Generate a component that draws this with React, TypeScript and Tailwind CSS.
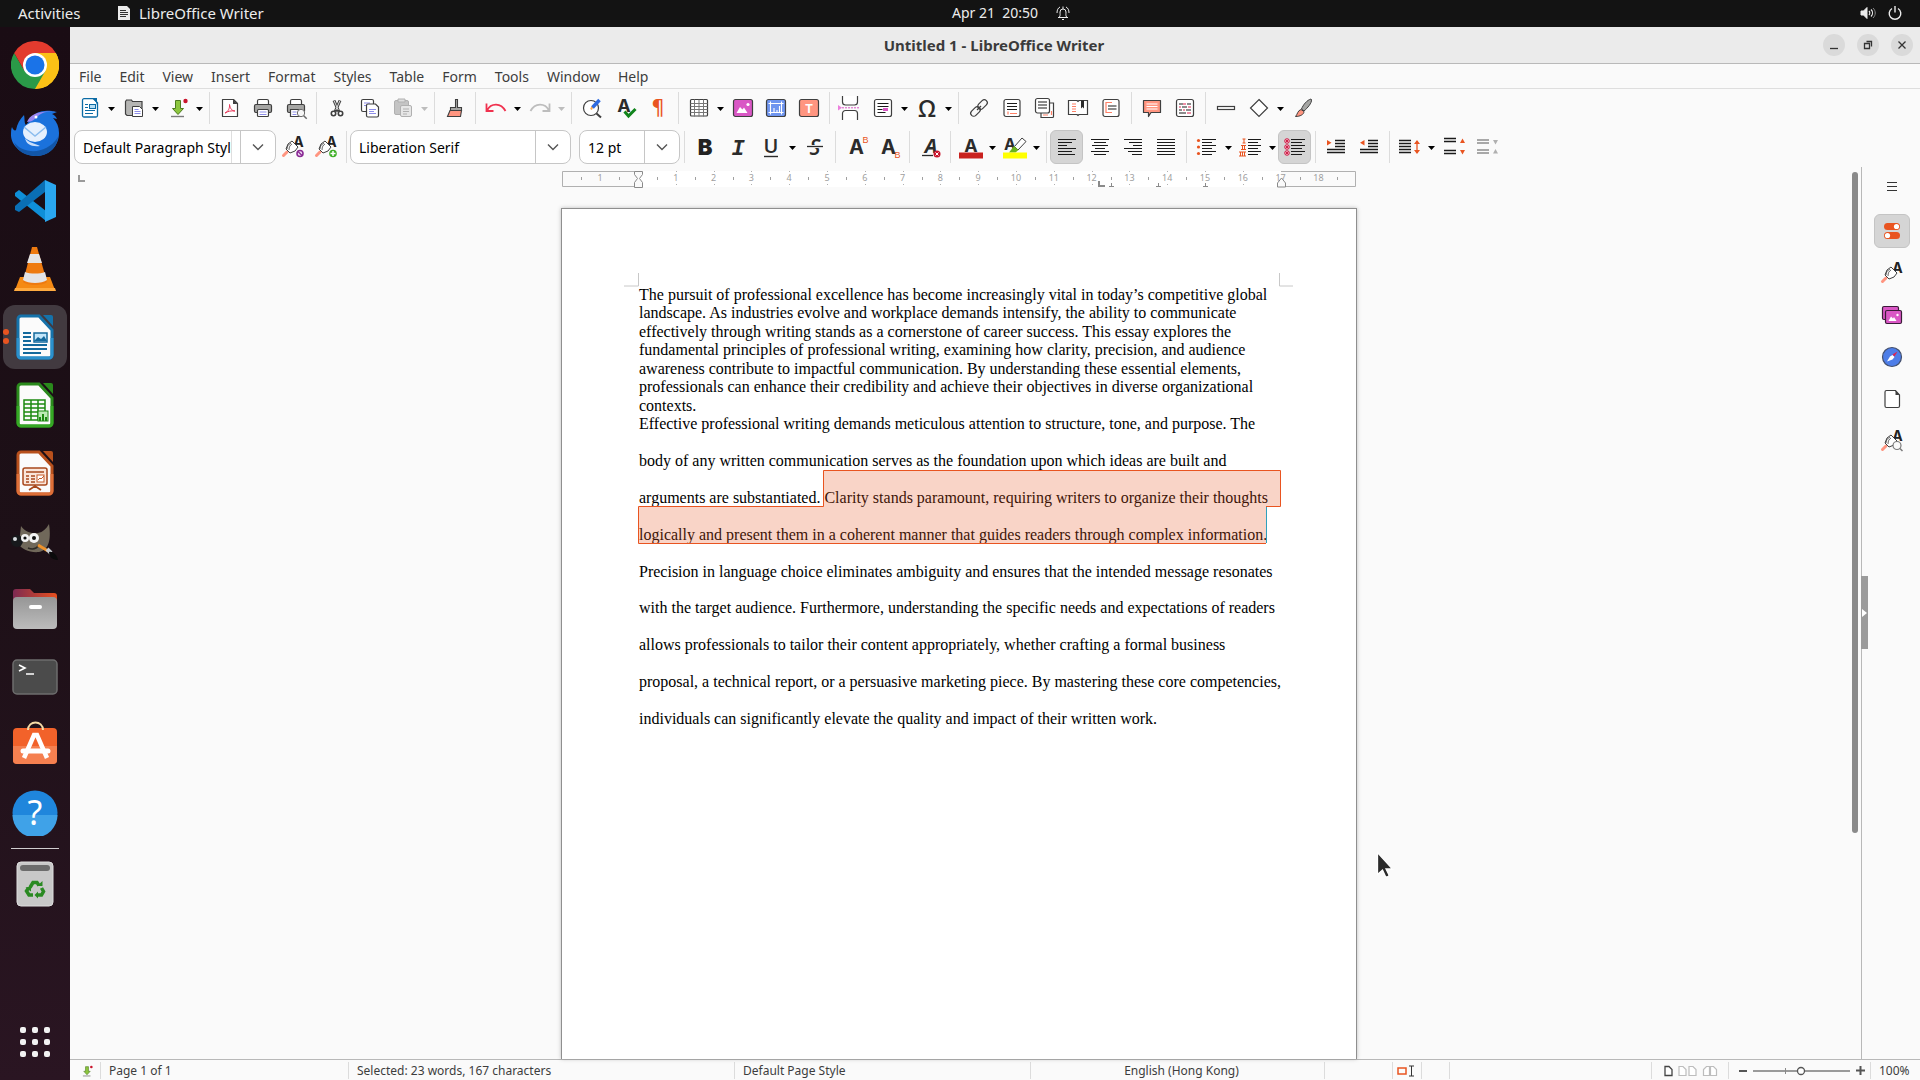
import type { ReactNode } from 'react';

const INK = '#3f3f3f';

function Icon({ children, size = 24 }: { children: ReactNode; size?: number }) {
  return (
    <svg width={size} height={size} viewBox="0 0 24 24" fill="none" className="shrink-0 overflow-visible" aria-hidden="true">
      {children}
    </svg>
  );
}

const lines = (d: string, color = '#1a1a1a', width = 1.2) => <path d={d} stroke={color} strokeWidth={width} />;

const letter = (char: string, x: number, y: number, size: number, fill = '#2b2b2b') => (
  <text x={x} y={y} fontSize={size} fontWeight="700" fontFamily="Inter, sans-serif" textAnchor="middle" fill={fill}>
    {char}
  </text>
);

const sheet = <rect x="4" y="3.5" width="16" height="17" rx="2" fill="#fff" stroke={INK} strokeWidth="1.2" />;

const styleBrush = (
  <>
    {letter('A', 17.5, 12, 14, '#222')}
    <path d="M2.500 20.500l3.500-3.500" stroke="#ff9580" strokeWidth="3" strokeLinecap="round" />
    <path d="M5 14l2-5 4-3 6 6-3 4-5 2z" fill="#fff" stroke={INK} />
    <path d="M6 14c0-3 2-5 4-6M8 15c0-3 1-5 3-6" stroke={INK} strokeWidth=".8" />
  </>
);

const icons: Record<string, ReactNode> = {
  newDoc: (
    <>
      <path d="M6 2.700h9.500l4 4V19.500a1.500 1.500 0 0 1-1.500 1.500H6a1.500 1.500 0 0 1-1.500-1.500V4.200A1.500 1.500 0 0 1 6 2.700z" fill="#fff" stroke="#0b6ba5" strokeWidth="1.300" />
      <path d="M12 2h7v7c-1-4-3-6-7-7z" fill="#0b6ba5" />
      {lines('M7 8.500h3M7 11.500h3M7 14.500h10M7 17.500h8', '#0b6ba5')}
      <rect x="11.500" y="8.500" width="6" height="4" fill="#b8dff5" stroke="#0b6ba5" />
    </>
  ),
  open: (
    <>
      <path d="M3.500 5.500l1-1.500h5l1 1.500h9.500v14h-15l-1.500-1.500z" fill="#b5b5b3" stroke={INK} strokeWidth="1.200" />
      <path d="M10.500 10.500h7l3 3v7h-10z" fill="#fff" stroke={INK} />
      {lines('M12.500 13.500h4M12.500 15.500h6M12.500 17.500h6', '#8d8de8', 1)}
    </>
  ),
  save: (
    <>
      <path d="M9.500 4.500h5v8h3L12 18.500l-5.500-6h3z" fill="#8cc63e" stroke="#4c7a1e" />
      <path d="M5 20.500h13" stroke="#7a7a7a" strokeWidth="1.400" />
      <circle cx="19.500" cy="5" r="2.200" fill="#c9142b" />
    </>
  ),
  pdf: (
    <>
      <path d="M4.500 3.500h11l4 4v13h-15z" fill="#fff" stroke={INK} strokeWidth="1.200" strokeLinejoin="round" />
      <path d="M15 3.500v4.500h4.500z" fill={INK} />
      <path d="M7 17c3-1 5-5 4.500-8.500.500 4 2.500 6.500 5.500 6.500-4-.500-7 .300-10 2z" stroke="#e8395a" />
    </>
  ),
  print: (
    <>
      <rect x="6.500" y="3.500" width="11" height="6" rx="1.500" fill="#fff" stroke={INK} strokeWidth="1.200" />
      <rect x="3.500" y="8.500" width="17" height="8" rx="1.500" fill="#a6a6a4" stroke={INK} strokeWidth="1.200" />
      <rect x="6.500" y="13.500" width="11" height="7" rx="1" fill="#fff" stroke={INK} strokeWidth="1.200" />
      {lines('M8.500 16h7M8.500 18.500h7', '#8d8de8', 1)}
    </>
  ),
  preview: (
    <>
      <rect x="6.500" y="3.500" width="11" height="6" rx="1.500" fill="#fff" stroke={INK} strokeWidth="1.200" />
      <rect x="3.500" y="8.500" width="17" height="8" rx="1.500" fill="#a6a6a4" stroke={INK} strokeWidth="1.200" />
      <path d="M6.500 13.500h9v7h-9z" fill="#fff" stroke={INK} strokeWidth="1.200" />
      {lines('M8.500 16h4M8.500 18.500h4', '#8d8de8', 1)}
      <circle cx="17" cy="17" r="3.700" fill="#f7f7f7" stroke="#6a6a6a" />
      <path d="M19.700 19.700l3 3" stroke="#6a6a6a" strokeWidth="1.500" />
    </>
  ),
  cut: (
    <>
      <path d="M9 4.500l4.800 11M15 4.500l-4.800 11" stroke={INK} strokeWidth="3" />
      <path d="M9.200 5l4 9M14.800 5l-4 9" stroke="#ddd" />
      <circle cx="8.500" cy="17.500" r="2.200" fill="#fff" stroke={INK} strokeWidth="1.600" />
      <circle cx="15.500" cy="17.500" r="2.200" fill="#fff" stroke={INK} strokeWidth="1.600" />
    </>
  ),
  copy: (
    <>
      <rect x="3.500" y="3.500" width="12" height="12" rx="1.500" fill="#fff" stroke={INK} strokeWidth="1.200" />
      {lines('M6 7h6M6 9.500h3', '#8d8de8', 1)}
      <path d="M8.500 9.500a1.500 1.500 0 0 1 1.500-1.500h7.500l3 3v8.500a1.500 1.500 0 0 1-1.500 1.500h-9a1.500 1.500 0 0 1-1.500-1.500z" fill="#fff" stroke={INK} strokeWidth="1.200" />
      {lines('M11 13.500h7M11 15.500h5M11 17.500h7', '#8d8de8', 1)}
    </>
  ),
  paste: (
    <>
      <rect x="3.500" y="4.500" width="14" height="14" rx="1.500" fill="#c4c4c4" stroke="#b0b0b0" />
      <path d="M7 3h7v3H7z" fill="#ddd" stroke="#b0b0b0" />
      <rect x="9.500" y="9.500" width="11" height="11" rx="1.500" fill="#e6e6e6" stroke="#b0b0b0" />
      {lines('M12 13h6M12 15.500h6M12 18h4', '#b0b0b0', 1)}
    </>
  ),
  clone: (
    <>
      <path d="M12.500 3.500h2v8h4v3h-11v-3h5z" fill="#a6a6a4" stroke={INK} strokeWidth="1.100" />
      <path d="M7 14.500h11.500l-1 6H4.500z" fill="#ff9580" stroke={INK} strokeWidth="1.100" />
    </>
  ),
  undo: <path d="M2.500 7.500v7.500h7M3 14.500c4-8 14-8 18.500.500" stroke="#f0324f" strokeWidth="1.800" />,
  redo: <path d="M21.500 7.500v7.500h-7M21 14.500c-4-8-14-8-18.500.500" stroke="#bdbdbd" strokeWidth="1.800" />,
  find: (
    <>
      <circle cx="11" cy="12" r="7.500" fill="#fff" stroke={INK} strokeWidth="1.200" />
      <path d="M16.500 17.500l4.500 4" stroke={INK} strokeWidth="2" />
      <path d="M11 13.500l1.500-3" stroke="#ffab4a" strokeWidth="2" />
      <path d="M12.500 11.500l7-7.500" stroke="#2f6be0" strokeWidth="3.500" />
    </>
  ),
  spell: (
    <>
      {letter('A', 11, 16, 18)}
      <path d="M11.500 15.500l4 4.500 7-7" stroke="#11841c" strokeWidth="3" />
    </>
  ),
  marks: (
    <text x="12" y="19" fontSize="21" fontFamily="DejaVu Sans, sans-serif" textAnchor="middle" fill="#e95420">¶</text>
  ),
  table: (
    <>
      <rect x="3.500" y="3.500" width="17" height="16.500" rx="1" fill="#fff" stroke={INK} strokeWidth="1.200" />
      {lines('M3.500 7.500h17M3.500 10.500h17M3.500 13.500h17M3.500 16.500h17M7.500 3.500v17M12 3.500v17M16.500 3.500v17', '#777', 1)}
    </>
  ),
  image: (
    <>
      <rect x="2.500" y="3.500" width="19" height="17" rx="2" fill="#d957c5" stroke={INK} strokeWidth="1.200" />
      <path d="M5.500 17l3.500-6 2.500 2.500 1.500-2 3.500 5.500z" fill="#fff" />
      <circle cx="17" cy="8.500" r="1.600" fill="#fff" />
    </>
  ),
  chart: (
    <>
      <rect x="2.500" y="3.500" width="19" height="17" rx="2" fill="#6f95ef" stroke={INK} strokeWidth="1.200" />
      {lines('M6.500 5.500v13M4.500 7.500h15M17.500 5.500v13M4.500 16.500h15M10 16v-4M13 16v-2M15.500 16v-6', '#fff', 1.1)}
    </>
  ),
  textBox: (
    <>
      <rect x="2.500" y="3.500" width="19" height="17" rx="2" fill="#ff9580" stroke={INK} strokeWidth="1.200" />
      {letter('T', 12, 16.5, 12, '#fff')}
    </>
  ),
  pageBreak: (
    <>
      <path d="M4.500 0v6a3 3 0 0 0 3 3h9a3 3 0 0 0 3-3V0M4.500 24v-6.500a3 3 0 0 1 3-3h9a3 3 0 0 1 3 3V24" fill="#fff" stroke={INK} strokeWidth="1.200" />
      <path d="M0 9l4 2.800L0 14.500z" fill="#ec7fdd" />
      <path d="M4 11.800h18" stroke="#d957c5" strokeDasharray="2 1" />
    </>
  ),
  field: (
    <>
      <rect x="3.500" y="3.500" width="17" height="17" rx="2" fill="#fff" stroke={INK} strokeWidth="1.200" />
      {lines('M6.500 7.500h11M6.500 10.500h11M6.500 13.500h5M6.500 16.500h8')}
      <rect x="12" y="12" width="5" height="3" fill="#d957c5" />
    </>
  ),
  omega: (
    <text x="12" y="20.500" fontSize="23" fontWeight="600" fontFamily="Open Sans, sans-serif" textAnchor="middle" fill="#2b2b2b">Ω</text>
  ),
  link: (
    <g stroke={INK} strokeWidth="1.200">
      <rect x="10" y="5.500" width="11" height="6" rx="3" transform="rotate(-45 15.500 8.500)" />
      <rect x="3" y="12.500" width="11" height="6" rx="3" transform="rotate(-45 8.500 15.500)" />
      <path d="M10 14l4-4" />
    </g>
  ),
  footnote: (
    <>
      {sheet}
      {lines('M7 7.500h10M7 10.500h10M7 13.500h10')}
      {lines('M8 15.500v3M10 17.500h7', '#ff8066')}
    </>
  ),
  endnote: (
    <>
      <path d="M8 7h12.500v13.500a1 1 0 0 1-1 1H8z" fill="#fff" stroke={INK} strokeWidth="1.200" />
      <rect x="2.500" y="2.500" width="14" height="14.500" rx="2" fill="#fff" stroke={INK} strokeWidth="1.200" />
      {lines('M5 6h9M5 9h9M5 12h9')}
      {lines('M18.500 15v4M10 19h5', '#ff8066')}
    </>
  ),
  bookmark: (
    <>
      <path d="M2.500 4.500H11l1 1 1-1h8.500v14H13l-1 1-1-1H2.500z" fill="#fff" stroke={INK} strokeWidth="1.200" />
      {lines('M6 8h4M6 10.500h4M6 13h4M6 15.500h4', '#ff8066')}
      <path d="M15 4.500h3v8l-1.500-1.500-1.500 1.500z" fill="#2b2b2b" />
    </>
  ),
  crossRef: (
    <>
      {sheet}
      {lines('M13 6.500H7v10h6', '#ff8066')}
      {lines('M9 10h8.500M9 13h8.500')}
    </>
  ),
  comment: (
    <>
      <path d="M3.500 4.500h17v12H11l-2.500 4v-4h-5z" fill="#ff9580" stroke={INK} strokeWidth="1.200" strokeLinejoin="round" />
      {lines('M6.500 8h11M6.500 10.500h11M6.500 13h11', '#fff')}
    </>
  ),
  track: (
    <>
      <rect x="3.500" y="3.500" width="17" height="17" rx="2" fill="#fff" stroke={INK} strokeWidth="1.200" />
      {lines('M6 8h4M14 8h4M9 11h5M6 14h3M13 14h5M6 17h7')}
      {lines('M10 8h3M6 11h2M15 11h3M10 14h2M14 17h4', '#e0234e')}
    </>
  ),
  hline: <rect x="3.500" y="10.500" width="17" height="3" fill="#fff" stroke={INK} strokeWidth="1.200" />,
  diamond: <path d="M12 3.500l8.500 8.500-8.500 8.500L3.500 12z" fill="#fff" stroke={INK} strokeWidth="1.200" />,
  draw: (
    <>
      <path d="M20 3c-4 1-8 6-9.500 10l2.500 2c3.500-3 8-8 7.500-11.500z" fill="#a6a6a4" stroke={INK} />
      <path d="M10 13.500l3 2c0 3-4 5-8.500 5 2-2 2-6 5.500-7z" fill="#ff9580" stroke={INK} />
    </>
  ),
  updateStyle: (
    <>
      {styleBrush}
      <circle cx="19" cy="18.500" r="3" fill="#f3e3f7" stroke="#8a2a94" strokeWidth="1.600" />
      <path d="M17 16.500l4 4" stroke="#8a2a94" strokeWidth="1.500" />
    </>
  ),
  newStyle: (
    <>
      {styleBrush}
      <circle cx="19" cy="18.500" r="3.800" fill="#3faf27" />
      <path d="M16.500 18.500h5M19 16v5" stroke="#fff" strokeWidth="1.500" />
    </>
  ),
  styles: styleBrush,
  inspector: (
    <>
      {styleBrush}
      <circle cx="17" cy="16.500" r="4" fill="#fafafa" stroke="#7a7a7a" strokeWidth="1.200" />
      <path d="M20 19.500l2.500 2.500" stroke="#7a7a7a" strokeWidth="1.500" />
    </>
  ),
  bold: (
    <text x="12" y="20" fontSize="22" fontWeight="900" fontFamily="Inter, sans-serif" textAnchor="middle" fill="#222">B</text>
  ),
  italic: (
    <text x="12" y="20" fontSize="22" fontStyle="italic" fontWeight="700" fontFamily="Liberation Mono, monospace" textAnchor="middle" fill="#2b2b2b">I</text>
  ),
  underline: (
    <>
      <text x="12" y="17.500" fontSize="20" fontWeight="600" fontFamily="Open Sans, sans-serif" textAnchor="middle" fill="#2b2b2b">U</text>
      <path d="M5 21.500h14" stroke="#2b2b2b" strokeWidth="1.400" />
    </>
  ),
  strike: (
    <>
      <text x="12" y="19.500" fontSize="21" fontStyle="italic" fontWeight="600" fontFamily="Open Sans, sans-serif" textAnchor="middle" fill="#2b2b2b">S</text>
      <path d="M4 11.500h16" stroke="#fafafa" strokeWidth="3" />
      <path d="M4 11.500h16" stroke="#2b2b2b" strokeWidth="1.300" />
    </>
  ),
  superscript: (
    <>
      {letter('A', 12.5, 19, 20)}
      <text x="21.500" y="7.500" fontSize="9" fontFamily="Liberation Sans, sans-serif" textAnchor="middle" fill="#e95420">B</text>
    </>
  ),
  subscript: (
    <>
      {letter('A', 11.5, 19, 20)}
      <text x="20.500" y="22.500" fontSize="9" fontFamily="Liberation Sans, sans-serif" textAnchor="middle" fill="#e95420">B</text>
    </>
  ),
  clear: (
    <>
      <text x="13" y="18" fontSize="20" fontStyle="italic" fontWeight="700" fontFamily="Open Sans, sans-serif" textAnchor="middle" fill="#2b2b2b">A</text>
      <path d="M4 20.500h11" stroke="#2b2b2b" strokeWidth="1.300" />
      <circle cx="19" cy="19" r="3.500" fill="#c9142b" />
      <path d="M17.500 17.500l3 3M20.500 17.500l-3 3" stroke="#fff" />
    </>
  ),
  fontColor: (
    <>
      {letter('A', 12, 16.5, 18)}
      <rect x="0" y="17.500" width="24" height="6" fill="#c9211e" />
    </>
  ),
  highlight: (
    <>
      {letter('A', 7, 14.5, 16)}
      <path d="M11.500 11.500L19 3l4 3.500-8 8.500z" fill="#fff" stroke={INK} />
      <path d="M6 17.500l5-6.500 4.500 4-3 2.500z" fill="#6bb31d" />
      <rect x="0" y="17.500" width="24" height="6" fill="#ff0" />
    </>
  ),
  alignLeft: lines('M3 4.500h18M3 7.500h14M3 10.500h9M3 13.500h18M3 16.500h14M3 19.500h17', '#1a1a1a', 1),
  alignCenter: lines('M3 4.500h18M6 7.500h12M4 10.500h16M7 13.500h10M3 16.500h18M6 19.500h12', '#1a1a1a', 1),
  alignRight: lines('M3 4.500h18M8 7.500h13M12 10.500h9M3 13.500h18M7 16.500h14M11 19.500h10', '#1a1a1a', 1),
  justify: lines('M3 4.500h18M3 7.500h18M3 10.500h18M3 13.500h18M3 16.500h18M3 19.500h18', '#1a1a1a', 1),
  bullets: (
    <>
      <circle cx="3.500" cy="5.500" r="1.600" fill="#e95420" />
      <circle cx="3.500" cy="12" r="1.600" fill="#e95420" />
      <circle cx="3.500" cy="18.500" r="1.600" fill="#e95420" />
      {lines('M7 4.500h14M7 7.500h10M7 10.500h14M7 13.500h10M7 16.500h14M7 19.500h10', '#1a1a1a', 1)}
    </>
  ),
  numbering: (
    <>
      {lines('M3.500 4h3M5 4v4M3.500 8h3M2 10.500h5M3.500 10.500v4M5.500 10.500v4M2 14.500h5M0 17h7M1.500 17v4M3.500 17v4M5.500 17v4M0 21h7', '#e95420', 1)}
      {lines('M9 4.500h13M9 7.500h10M9 10.500h13M9 13.500h10M9 16.500h13M9 19.500h10', '#1a1a1a', 1)}
    </>
  ),
  noList: (
    <>
      {[6, 12, 18].map((y) => (
        <g key={y} stroke="#d0224c">
          <circle cx="4" cy={y} r="2.300" fill="#f7c4cf" />
          <path d={`M2.500 ${y - 1.5}l3 3M5.500 ${y - 1.5}l-3 3`} />
        </g>
      ))}
      {lines('M8 4.500h14M8 7.500h11M8 10.500h14M8 13.500h11M8 16.500h14M8 19.500h11', '#1a1a1a', 1)}
    </>
  ),
  indent: (
    <>
      <path d="M3 5v5.500l4.500-2.700z" fill="#e95420" />
      {lines('M11 5.500h10M11 8.500h10M11 11.500h10M3 14.500h18M3 17.500h18', '#1a1a1a', 1.4)}
    </>
  ),
  outdent: (
    <>
      <path d="M7.500 5v5.500L3 7.800z" fill="#e95420" />
      {lines('M11 5.500h10M11 8.500h10M11 11.500h10M3 14.500h18M3 17.500h18', '#1a1a1a', 1.4)}
    </>
  ),
  lineSpacing: (
    <>
      {lines('M1 5.500h12M1 8.500h12M1 11.500h12M1 14.500h12M1 17.500h12', '#1a1a1a', 1.4)}
      <path d="M19 6v12" stroke="#e95420" strokeWidth="1.300" />
      <path d="M16 9l3-4 3 4zM16 15l3 4 3-4z" fill="#e95420" />
    </>
  ),
  moreSpacing: (
    <>
      {lines('M2 3.500h12M2 6.500h12M2 15.500h12M2 18.500h12', '#1a1a1a', 1.6)}
      <path d="M18 8l2.500-4.500L23 8zM18 15l2.500 4.500L23 15z" fill="#e95420" />
    </>
  ),
  lessSpacing: (
    <>
      {lines('M2 5h12M2 8h12M2 15h12M2 18h12', '#a8a8a8', 2)}
      <path d="M18 5l2.500 4.500L23 5zM18 18.500l2.500-4.500L23 18.500z" fill="#b0b0b0" />
    </>
  ),
  menu: lines('M7 7.500h10M7 11.500h10M7 15.500h10', '#333', 1),
  properties: (
    <>
      <rect x="4" y="4" width="16" height="7" rx="3.500" fill="#e95420" />
      <circle cx="16.500" cy="7.500" r="2.600" fill="#fff" />
      <rect x="4" y="13" width="16" height="7" rx="3.500" fill="#e95420" />
      <circle cx="7.500" cy="16.500" r="2.600" fill="#fff" />
    </>
  ),
  gallery: (
    <>
      <rect x="2.500" y="3.500" width="16" height="13" rx="1.500" fill="#d957c5" stroke="#3a1c38" strokeWidth="1.200" />
      <rect x="5.500" y="7.500" width="16" height="13" rx="1.500" fill="#d957c5" stroke="#3a1c38" strokeWidth="1.200" />
      <path d="M8.500 18l2.500-4.500 2 2 1-1.500 2.500 4z" fill="#fff" />
      <circle cx="17.500" cy="12" r="1.200" fill="#fff" />
    </>
  ),
  navigator: (
    <>
      <circle cx="12" cy="12" r="9.500" fill="#4d7de8" stroke="#44506e" strokeWidth="1.200" />
      <path d="M7 16.500l3-5 2.500-1.500 2 2-2 2.500z" fill="#fff" />
      <path d="M12.500 9.500l5-3-3 5z" fill="#e0234e" />
    </>
  ),
  page: (
    <>
      <path d="M5 5a1.500 1.500 0 0 1 1.500-1.500h9L19.500 8v11a1.500 1.500 0 0 1-1.500 1.500H6.500A1.500 1.500 0 0 1 5 19z" fill="#fff" stroke={INK} strokeWidth="1.200" />
      <path d="M15.500 3.500V8h4z" fill={INK} />
    </>
  ),
};

type Tool = { icon: string; label: string; split?: boolean; active?: boolean; dim?: boolean } | '|';

const standardBar: Tool[] = [
  { icon: 'newDoc', label: 'New', split: true },
  { icon: 'open', label: 'Open', split: true },
  { icon: 'save', label: 'Save', split: true },
  '|',
  { icon: 'pdf', label: 'Export as PDF' },
  { icon: 'print', label: 'Print' },
  { icon: 'preview', label: 'Print preview' },
  '|',
  { icon: 'cut', label: 'Cut' },
  { icon: 'copy', label: 'Copy' },
  { icon: 'paste', label: 'Paste', split: true, dim: true },
  '|',
  { icon: 'clone', label: 'Clone formatting' },
  '|',
  { icon: 'undo', label: 'Undo', split: true },
  { icon: 'redo', label: 'Redo', split: true, dim: true },
  '|',
  { icon: 'find', label: 'Find and replace' },
  { icon: 'spell', label: 'Spelling' },
  { icon: 'marks', label: 'Formatting marks' },
  '|',
  { icon: 'table', label: 'Insert table', split: true },
  { icon: 'image', label: 'Insert image' },
  { icon: 'chart', label: 'Insert chart' },
  { icon: 'textBox', label: 'Insert text box' },
  '|',
  { icon: 'pageBreak', label: 'Page break' },
  { icon: 'field', label: 'Insert field', split: true },
  { icon: 'omega', label: 'Special character', split: true },
  '|',
  { icon: 'link', label: 'Hyperlink' },
  { icon: 'footnote', label: 'Footnote' },
  { icon: 'endnote', label: 'Endnote' },
  { icon: 'bookmark', label: 'Bookmark' },
  { icon: 'crossRef', label: 'Cross-reference' },
  '|',
  { icon: 'comment', label: 'Comment' },
  { icon: 'track', label: 'Track changes' },
  '|',
  { icon: 'hline', label: 'Line' },
  { icon: 'diamond', label: 'Basic shapes', split: true },
  { icon: 'draw', label: 'Draw functions' },
];

const styleTools: Tool[] = [
  { icon: 'updateStyle', label: 'Update style' },
  { icon: 'newStyle', label: 'New style' },
  '|',
];

const formatTools: Tool[] = [
  '|',
  { icon: 'bold', label: 'Bold' },
  { icon: 'italic', label: 'Italic' },
  { icon: 'underline', label: 'Underline', split: true },
  { icon: 'strike', label: 'Strikethrough' },
  '|',
  { icon: 'superscript', label: 'Superscript' },
  { icon: 'subscript', label: 'Subscript' },
  '|',
  { icon: 'clear', label: 'Clear formatting' },
  '|',
  { icon: 'fontColor', label: 'Font color', split: true },
  { icon: 'highlight', label: 'Highlighting', split: true },
  '|',
  { icon: 'alignLeft', label: 'Align left', active: true },
  { icon: 'alignCenter', label: 'Align center' },
  { icon: 'alignRight', label: 'Align right' },
  { icon: 'justify', label: 'Justified' },
  '|',
  { icon: 'bullets', label: 'Bullets', split: true },
  { icon: 'numbering', label: 'Numbering', split: true },
  { icon: 'noList', label: 'No list', active: true },
  '|',
  { icon: 'indent', label: 'Increase indent' },
  { icon: 'outdent', label: 'Decrease indent' },
  '|',
  { icon: 'lineSpacing', label: 'Line spacing', split: true },
  { icon: 'moreSpacing', label: 'Increase paragraph spacing' },
  { icon: 'lessSpacing', label: 'Decrease paragraph spacing' },
];

function ToolItems({ items }: { items: Tool[] }) {
  return (
    <>
      {items.map((tool, i) =>
        tool === '|' ? (
          <div key={i} className="w-2 h-8 flex justify-center shrink-0">
            <div className="w-px h-full bg-[#dcdcdc]" />
          </div>
        ) : (
          <div key={i} className="flex items-center shrink-0">
            <button
              aria-label={tool.label}
              className={`w-[33px] h-[34px] flex items-center justify-center rounded-md border ${
                tool.active ? 'bg-[#d5d5d5] border-[#c4c4c4]' : 'border-transparent'
              }`}
            >
              <Icon>{icons[tool.icon]}</Icon>
            </button>
            {tool.split && (
              <button aria-label={`${tool.label} options`} className="w-[11px] h-[34px] flex items-center justify-center">
                <svg width="7" height="4" viewBox="0 0 7 4" className="mt-0.5" aria-hidden="true">
                  <path d="M0 0h7L3.500 4z" fill={tool.dim ? '#bdbdbd' : '#000'} />
                </svg>
              </button>
            )}
          </div>
        ),
      )}
    </>
  );
}

function ComboBox({ label, value, width, clipped }: { label: string; value: string; width: string; clipped?: boolean }) {
  return (
    <div className={`h-[34px] flex items-stretch shrink-0 bg-white border border-[#c6c6c6] rounded-lg overflow-hidden ${width}`}>
      <input
        aria-label={label}
        defaultValue={value}
        className={`flex-1 min-w-0 ml-2 text-[14px] text-black outline-none ${clipped ? 'mr-2 border-r border-[#dedede]' : ''}`}
      />
      <button aria-label={`${label} list`} className="w-[35px] flex items-center justify-center border-l border-[#c6c6c6]">
        <svg width="12" height="8" viewBox="0 0 12 8" fill="none" aria-hidden="true">
          <path d="M1 1.500l5 5 5-5" stroke="#555" strokeWidth="1.400" />
        </svg>
      </button>
    </div>
  );
}

/* ---------- dock ---------- */

const officeDoc = (dark: string, light: string, inner: ReactNode) => (
  <svg width="38" height="46" viewBox="0 0 38 46" fill="none" aria-hidden="true">
    <path d="M6 2h17l13 14v25a3 3 0 0 1-3 3H5a3 3 0 0 1-3-3V5a3 3 0 0 1 3-3z" fill="#fbfbfb" stroke={dark} strokeWidth="3" />
    <path d="M2 24v17a3 3 0 0 0 3 3h28a3 3 0 0 0 3-3V24" stroke={light} strokeWidth="3" />
    <path d="M27 1h8a2 2 0 0 1 2 2v9z" fill={dark} />
    {inner}
  </svg>
);

const dockApps: { name: string; active?: boolean; art: ReactNode }[] = [
  {
    name: 'Google Chrome',
    art: (
      <svg width="48" height="48" viewBox="0 0 48 48" aria-hidden="true">
        <path d="M24 24L3.200 12A24 24 0 0 1 44.800 12z" fill="#e33b2e" />
        <path d="M24 24l20.800-12A24 24 0 0 1 24 48z" fill="#fbc116" />
        <path d="M24 12h20.800A24 24 0 0 1 24 48l10.400-18z" fill="#fbc116" />
        <path d="M3.200 12A24 24 0 0 0 24 48l10.400-18L24 24l-10.400 6z" fill="#2a9a48" />
        <path d="M3.200 12l10.400 18L24 24V12z" fill="#e33b2e" />
        <circle cx="24" cy="24" r="12" fill="#fff" />
        <circle cx="24" cy="24" r="9.500" fill="#1a73e8" />
      </svg>
    ),
  },
  {
    name: 'Thunderbird',
    art: (
      <svg width="48" height="48" viewBox="0 0 48 48" aria-hidden="true">
        <path d="M1 18c1 3 3 4 4 3 1-6 4-11 8-15 1 4 0 8 2 10l5-6c4-8 14-10 26-7l-5 2c3 1 4 3 5 5l-4-1c4 4 6 9 6 15 0 13-10 23-23 23S0 37 0 26c0-3 0-6 1-8z" fill="#1b72dc" />
        <path d="M3 33c8 12 32 14 44-5-1 12-11 19-22 19S6 42 3 33z" fill="#1256a8" />
        <path d="M16 13c3-8 13-12 30-10-10-1-15 0-19 4-3 3-6 6-11 6z" fill="#9a86f2" />
        <ellipse cx="24" cy="23" rx="12" ry="10" fill="#e6f0fd" />
        <path d="M13 18l11 9 11-9" stroke="#8bbcee" strokeWidth="1.500" fill="none" />
        <path d="M14 29c4 5 9 5 15 8-9 1-14-2-15-8z" fill="#c9defa" />
        <circle cx="25" cy="8" r="1.500" fill="#fff" />
      </svg>
    ),
  },
  {
    name: 'Visual Studio Code',
    art: (
      <svg width="42" height="42" viewBox="0 0 42 42" aria-hidden="true">
        <path d="M1 13l4-3 27 21v10L1 16z" fill="#0f8fd8" />
        <path d="M31 0v12L5 32l-4-2v-4z" fill="#0a6fb5" />
        <path d="M31 0l11 5v32l-11 5z" fill="#2aa7f0" />
      </svg>
    ),
  },
  {
    name: 'VLC media player',
    art: (
      <svg width="42" height="46" viewBox="0 0 42 46" aria-hidden="true">
        <path d="M6 31h30l5 13H1z" fill="#f58a14" />
        <path d="M1 42h40l1 3H0z" fill="#ffab40" />
        <path d="M18 1h5l10 35c-4 4-20 4-24 0z" fill="#ee7a10" />
        <path d="M16 8h9l3 9H13zM11 26c5 2 15 2 20 0l2 8c-5 4-19 4-24 0z" fill="#e4e4e6" />
      </svg>
    ),
  },
  {
    name: 'LibreOffice Writer',
    active: true,
    art: officeDoc(
      '#1572aa',
      '#2b90cc',
      <>
        <path d="M7 19h8M7 23h8M7 27h8M7 31h24M7 35h24M7 39h18" stroke="#14699c" strokeWidth="2" />
        <rect x="18" y="19" width="13" height="9" fill="#c3e6fa" stroke="#14699c" strokeWidth="1.500" />
        <path d="M18 27l4-4 3 2 3-3 3 5z" fill="#14699c" />
      </>,
    ),
  },
  {
    name: 'LibreOffice Calc',
    art: officeDoc(
      '#2a8a1c',
      '#35a824',
      <>
        <path d="M8 18h21v20H8zM8 22h21M8 26h21M8 30h21M8 34h21M15 18v20M22 18v20" stroke="#1e8a12" strokeWidth="1.500" />
        <rect x="22" y="29" width="10" height="10" fill="#bdeab4" stroke="#1e8a12" />
        <path d="M24 39v-4M27 39v-7M30 39v-4" stroke="#1e8a12" strokeWidth="2" />
      </>,
    ),
  },
  {
    name: 'LibreOffice Impress',
    art: officeDoc(
      '#b8501c',
      '#dd6f38',
      <>
        <rect x="7" y="18" width="24" height="17" rx="2" fill="#fae6da" stroke="#a8481c" strokeWidth="1.500" />
        <path d="M10 22h18M10 26h3M10 29h3M10 32h3M15 26h4M15 29h4M15 32h4M19 35v2M13 40l6-4 6 4" stroke="#a8481c" strokeWidth="1.700" />
        <rect x="21" y="25" width="7" height="7" fill="#fff" stroke="#c55a28" />
        <path d="M22 30l2-2 1 1 3-3" stroke="#c55a28" />
      </>,
    ),
  },
  {
    name: 'GIMP',
    art: (
      <svg width="48" height="40" viewBox="0 0 48 40" fill="none" aria-hidden="true">
        <path d="M10 5c4 6 11 8 17 7 5-1 8-4 11-9 2 13 1 26-10 28-9 1-18-3-20-8z" fill="#70685a" />
        <circle cx="6" cy="20" r="6" fill="#17191c" />
        <circle cx="4" cy="18" r="2" fill="#d8dce0" />
        <circle cx="14" cy="17" r="4" fill="#f3f3f3" />
        <circle cx="23" cy="17" r="5" fill="#f3f3f3" />
        <circle cx="14" cy="17" r="1.600" fill="#111" />
        <circle cx="23" cy="17" r="2" fill="#111" />
        <path d="M17 27c5 2 9 0 11-3" stroke="#2d2a25" strokeWidth="1.500" />
        <path d="M27 24l10 6" stroke="#f0932b" strokeWidth="3" />
        <path d="M36 28l4 4" stroke="#c9ced4" strokeWidth="4" />
        <path d="M38 31c4-1 8 3 9 8-4 0-9-2-9-8z" fill="#0b0b0c" />
      </svg>
    ),
  },
  {
    name: 'Files',
    art: (
      <svg width="46" height="42" viewBox="0 0 46 42" aria-hidden="true">
        <defs>
          <linearGradient id="filesBack">
            <stop stopColor="#7c2a52" />
            <stop offset="1" stopColor="#e8501f" />
          </linearGradient>
          <linearGradient id="filesFront" x2="0" y2="1">
            <stop stopColor="#969696" />
            <stop offset="1" stopColor="#bcbcbc" />
          </linearGradient>
        </defs>
        <path d="M1 4a3 3 0 0 1 3-3h14l4 4h20a3 3 0 0 1 3 3v12H1z" fill="url(#filesBack)" />
        <rect x="1" y="9" width="44" height="32" rx="4" fill="url(#filesFront)" />
        <rect x="17" y="17" width="13" height="4" rx="2" fill="#fff" />
      </svg>
    ),
  },
  {
    name: 'Terminal',
    art: (
      <svg width="46" height="36" viewBox="0 0 46 36" fill="none" aria-hidden="true">
        <rect x="1" y="1" width="44" height="34" rx="4" fill="#4b4b4b" stroke="#6e6e6e" strokeWidth="1.500" />
        <path d="M7 6l6 3-6 3M14 15h8" stroke="#fff" strokeWidth="1.600" />
      </svg>
    ),
  },
  {
    name: 'Ubuntu Software',
    art: (
      <svg width="46" height="48" viewBox="0 0 46 48" fill="none" aria-hidden="true">
        <rect x="1" y="7" width="44" height="36" rx="4" fill="#f2622a" />
        <path d="M1 25h44v14a4 4 0 0 1-4 4H5a4 4 0 0 1-4-4z" fill="#f58050" />
        <path d="M16 9c0-10 15-10 15 0" stroke="#f7dba6" strokeWidth="2" />
        <path d="M12 37l10-23h3l10 23" stroke="#fff" strokeWidth="4.500" />
        <path d="M11 30h25" stroke="#fff" strokeWidth="5" strokeLinecap="round" />
      </svg>
    ),
  },
  {
    name: 'Help',
    art: (
      <svg width="46" height="46" viewBox="0 0 46 46" fill="none" aria-hidden="true">
        <circle cx="23" cy="23" r="22.500" fill="#1f86dc" />
        <path d="M.500 25h45a22.500 22.500 0 0 1-45 0z" fill="#3fa2e8" />
        <text x="23" y="35" fontSize="34" fontFamily="Noto Sans, sans-serif" textAnchor="middle" fill="#fff">?</text>
      </svg>
    ),
  },
];

const trash = (
  <svg width="38" height="46" viewBox="0 0 38 46" fill="none" aria-hidden="true">
    <rect x="1" y="1" width="36" height="44" rx="4" fill="#c8c8c8" stroke="#dedede" />
    <rect x="4" y="4" width="30" height="6" rx="3" fill="#6c6c6c" />
    <g stroke="#2a8a22" strokeWidth="3.500">
      <path d="M14 26.500l3-5h4l2 3" />
      <path d="M25.500 27l2 3.500-2 3.500H21" />
      <path d="M17 34h-4l-2.500-4 2-3" />
    </g>
    <path d="M21 25h5.500v-5zM22 30.500v7l-3.500-3.500zM9.500 26.500l5.500-1v5z" fill="#2a8a22" />
  </svg>
);

function Dock() {
  return (
    <nav aria-label="Dock" className="w-[70px] shrink-0 flex flex-col items-center pt-1.5 pb-1.5 bg-linear-to-b from-[#1a0c14] via-[#1d1017] to-[#2a1522]">
      <div className="flex flex-col gap-1">
        {dockApps.map((app) => (
          <button
            key={app.name}
            aria-label={app.name}
            className={`relative w-16 h-16 rounded-xl flex items-center justify-center ${app.active ? 'bg-[#423a40]' : ''}`}
          >
            {app.art}
            {app.active && (
              <span className="absolute left-0 top-6 flex flex-col gap-[3px]">
                <span className="size-1.5 rounded-full bg-[#e95420]" />
                <span className="size-1.5 rounded-full bg-[#e95420]" />
              </span>
            )}
          </button>
        ))}
      </div>
      <div className="w-12 h-px my-[3px] bg-[#d0cdcf]" />
      <button aria-label="Trash" className="w-16 h-16 flex items-center justify-center">{trash}</button>
      <button aria-label="Show applications" className="mt-auto w-16 h-16 flex items-center justify-center">
        <span className="grid grid-cols-3 gap-1.5">
          {Array.from({ length: 9 }, (_, i) => (
            <span key={i} className="size-1.5 rounded-[2px] bg-[#f2f2f2]" />
          ))}
        </span>
      </button>
    </nav>
  );
}

/* ---------- document ---------- */

const CM = 37.8;
const ZERO = 77;

function Ruler() {
  const marks = [-1, ...Array.from({ length: 18 }, (_, i) => i + 1)];
  const halves = Array.from({ length: 21 }, (_, i) => i - 1.5);
  const end = Math.round(ZERO + 17 * CM);
  return (
    <svg width="796" height="18" viewBox="0 0 796 18" fill="none" className="shrink-0" role="img" aria-label="Ruler">
      <rect x={ZERO} y="0" width={end - ZERO} height="16" fill="#fff" />
      <path d={`M${ZERO} .500H1.500v15H${ZERO}M${end} .500H794.500v15H${end}`} stroke="#b0b0b0" />
      {halves.map((n) => (
        <path key={n} d={`M${Math.round(ZERO + n * CM) + 0.5} 6v3`} stroke="#a0a0a0" />
      ))}
      {marks.map((n) => (
        <g key={n}>
          {n > 0 && n < 17 && <path d={`M${Math.round(ZERO + n * CM) + 0.5} 0v1M${Math.round(ZERO + n * CM) + 0.5} 13v1`} stroke="#b0b0b0" />}
          <text x={ZERO + n * CM} y="10" textAnchor="middle" fontSize="9" fill="#a0a0a0">{Math.abs(n)}</text>
        </g>
      ))}
      <path d={`M${ZERO - 3.5} .500h8v3l-3 4 3 4v5h-8v-5l3-4-3-4z`} fill="#fafafa" stroke="#8a8a8a" />
      <path d={`M${end - 3.5} 16v-4l4-5 4 5v4z`} fill="#fafafa" stroke="#8a8a8a" />
      <path d="M538 10v5h6" stroke="#8a8a8a" strokeWidth="2" />
      <path d="M548 15.500h5M550.500 12v3M595 15.500h5M597.500 12v3M642 15.500h5M644.500 12v3" stroke="#8a8a8a" />
    </svg>
  );
}

const intro = [
  'The pursuit of professional excellence has become increasingly vital in today’s competitive global',
  'landscape. As industries evolve and workplace demands intensify, the ability to communicate',
  'effectively through writing stands as a cornerstone of career success. This essay explores the',
  'fundamental principles of professional writing, examining how clarity, precision, and audience',
  'awareness contribute to impactful communication. By understanding these essential elements,',
  'professionals can enhance their credibility and achieve their objectives in diverse organizational',
  'contexts.',
];

const body = [
  'body of any written communication serves as the foundation upon which ideas are built and',
  'arguments are substantiated. Clarity stands paramount, requiring writers to organize their thoughts',
  'logically and present them in a coherent manner that guides readers through complex information.',
  'Precision in language choice eliminates ambiguity and ensures that the intended message resonates',
  'with the target audience. Furthermore, understanding the specific needs and expectations of readers',
  'allows professionals to tailor their content appropriately, whether crafting a formal business',
  'proposal, a technical report, or a persuasive marketing piece. By mastering these core competencies,',
  'individuals can significantly elevate the quality and impact of their written work.',
];

function Page() {
  return (
    <article className="relative w-[796px] flex-1 shrink-0 bg-white border border-b-0 border-[#8f8f8f] shadow-[0_0_4px_rgba(0,0,0,0.25)] px-[77px] pt-[77px] font-['Liberation_Serif',serif] text-[16px] leading-[18px] text-black whitespace-nowrap">
      <svg width="669" height="14" viewBox="0 0 669 14" fill="none" className="absolute left-[62px] top-[64px]" aria-hidden="true">
        <path d="M0 13h14.500V0M655.500 0v13H669" stroke="#c8c8c8" />
      </svg>
      <p className="h-[129px] grid auto-rows-fr">
        {intro.map((line) => (
          <span key={line}>{line}</span>
        ))}
      </p>
      <p>Effective professional writing demands meticulous attention to structure, tone, and purpose. The</p>
      <p className="h-[295px] grid auto-rows-fr items-end">
        {body.map((line) => (
          <span key={line}>{line}</span>
        ))}
      </p>
      <svg width="646" height="76" viewBox="0 0 646 76" fill="none" className="absolute left-[75px] top-[260px]" aria-hidden="true">
        <path d="M186 1h457v36h-14v37H1V38h185z" fill="#e95420" fillOpacity=".25" />
        <path d="M629 74.500H1.500V37.500h185V1.500h457v36H629" stroke="#e95420" />
        <path d="M629.500 38v36" stroke="#2fa0bd" />
      </svg>
    </article>
  );
}

/* ---------- window chrome ---------- */

const menus = ['File', 'Edit', 'View', 'Insert', 'Format', 'Styles', 'Table', 'Form', 'Tools', 'Window', 'Help'];

const deck = ['menu', 'properties', 'styles', 'gallery', 'navigator', 'page', 'inspector'];

const windowButtons = [
  { label: 'Minimize', d: 'M7 14.500h8' },
  { label: 'Restore', d: 'M7.500 9.500h5v5h-5zM9.500 7.500h5v5' },
  { label: 'Close', d: 'M7.500 7.500l7 7M14.500 7.500l-7 7' },
];

function TopBar() {
  return (
    <header className="h-[27px] shrink-0 flex items-center bg-[#131313] text-[#ececec] text-[15px] leading-[20px] pb-px">
      <div className="w-1/2 flex items-center pl-[18px]">
        <button className="w-[99px] text-left">Activities</button>
        <button className="flex items-center gap-2">
          <svg width="14" height="16" viewBox="0 0 14 16" fill="none" aria-hidden="true">
            <path d="M1 1h9l3 3v11H1z" fill="#ececec" />
            <path d="M3 5.500h6M3 7.500h8M3 9.500h8M3 11.500h6" stroke="#333" />
          </svg>
          LibreOffice Writer
        </button>
      </div>
      <div className="flex-1 -ml-2 flex items-center gap-[18px]">
        <button className="whitespace-pre text-[14px]">Apr 21  20:50</button>
        <svg width="14" height="16" viewBox="0 0 14 16" fill="none" stroke="#ececec" aria-label="Notifications">
          <path d="M2 12.500h10M3.500 12c1-2 .500-3 .500-5a3 3 0 0 1 6 0c0 2-.500 3 .500 5M6 14.500h2M1 8c0-3 1-5 3-6M13 8c0-3-1-5-3-6M7 4V1.500" />
        </svg>
      </div>
      <div className="flex items-center gap-3 pr-[18px]">
        <svg width="16" height="16" viewBox="0 0 16 16" fill="none" stroke="#ececec" aria-label="Volume">
          <path d="M1 6h2.500L7 2.500v11L3.500 10H1z" fill="#ececec" />
          <path d="M9 6c1 1 1 3 0 4M11 4.500c2 2 2 5 0 7" strokeWidth="1.200" />
          <path d="M13 3c3 3 3 7 0 10" stroke="#888" />
        </svg>
        <svg width="14" height="16" viewBox="0 0 14 16" fill="none" stroke="#ececec" strokeWidth="1.400" aria-label="Power">
          <path d="M4 3.500a5.800 5.800 0 1 0 6 0M7 1v6.500" />
        </svg>
      </div>
    </header>
  );
}

function StatusBar() {
  const cell = 'h-[17px] flex items-center border-l border-[#dcdcdc] pl-2 shrink-0';
  return (
    <footer className="h-[21px] shrink-0 flex items-center border-t border-[#b8b8b8] pt-px text-[12px] text-[#3d3d3d] whitespace-nowrap">
      <div className="w-[30px] flex justify-center pl-1">
        <Icon size={14}>{icons.save}</Icon>
      </div>
      <div className={`${cell} w-[248px]`}>Page 1 of 1</div>
      <div className={`${cell} w-[386px]`}>Selected: 23 words, 167 characters</div>
      <div className={`${cell} w-[296px]`}>Default Page Style</div>
      <div className={`${cell} w-[294px] justify-center`}>English (Hong Kong)</div>
      <div className={`${cell} w-[68px]`} />
      <div className={`${cell} w-[29px]`}>
        <svg width="18" height="12" viewBox="0 0 18 12" fill="none" className="-ml-1" aria-label="Selection mode">
          <rect x="1" y="3" width="8" height="6" stroke="#e95420" strokeWidth="1.500" />
          <path d="M12 1h5M12 11h5M14.500 1v10" stroke="#333" />
        </svg>
      </div>
      <div className={`${cell} w-[28px]`} />
      <div className="flex-1 h-[17px] border-l border-[#dcdcdc]" />
      <div className={`${cell} w-[77px]`}>
        <svg width="60" height="12" viewBox="0 0 60 12" fill="#fff" className="ml-1" aria-label="View layout">
          <path d="M1 1.500h4l3 3v6H1z" stroke="#444" strokeWidth="1.300" />
          <path d="M15 1.500h4l3 3v6h-7zM25 1.500h4l3 3v6h-7zM39.500 4.500l3-3h3v9h-6zM46.500 1.500h3l3 3v6h-6z" stroke="#bdbdbd" strokeWidth="1.200" />
        </svg>
      </div>
      <div className={`${cell} w-[142px] gap-1`}>
        <button aria-label="Zoom out" className="w-3 flex justify-center"><span className="w-2 h-0.5 bg-[#555]" /></button>
        <label className="relative w-[97px] h-4 flex items-center">
          <input type="range" aria-label="Zoom" defaultValue={50} className="absolute inset-0 w-full h-4 opacity-0" />
          <svg width="97" height="16" viewBox="0 0 97 16" fill="none" aria-hidden="true">
            <path d="M0 8h97" stroke="#9a9a9a" strokeWidth="2" />
            <path d="M32.500 5v6" stroke="#8a8a8a" />
            <circle cx="48" cy="8" r="3.500" fill="#fff" stroke="#555" strokeWidth="1.300" />
          </svg>
        </label>
        <button aria-label="Zoom in" className="w-3 flex justify-center">
          <svg width="9" height="9" viewBox="0 0 9 9" aria-hidden="true"><path d="M4.500 0v9M0 4.500h9" stroke="#555" strokeWidth="2" /></svg>
        </button>
      </div>
      <div className={`${cell} w-[50px]`}>100%</div>
    </footer>
  );
}

export default function App() {
  return (
    <div className="relative h-screen flex flex-col overflow-hidden bg-[#fafafa] font-['Noto_Sans',sans-serif]">
      <TopBar />
      <div className="flex-1 min-h-0 flex">
        <Dock />
        <div className="flex-1 min-w-0 flex flex-col">
          <div className="h-[37px] shrink-0 flex items-center bg-[#ebebeb] border-b border-[#b9b9b9] pr-[7px]">
            <div className="w-[95px]" />
            <h1 className="flex-1 text-center text-[15px] font-bold text-[#3b3b3b]">Untitled 1 - LibreOffice Writer</h1>
            <div className="flex gap-3">
              {windowButtons.map((b) => (
                <button key={b.label} aria-label={b.label} className="size-[22px] rounded-full bg-[#dadada]">
                  <svg width="22" height="22" viewBox="0 0 22 22" fill="none" stroke="#333" strokeWidth="1.300" aria-hidden="true">
                    <path d={b.d} />
                  </svg>
                </button>
              ))}
            </div>
          </div>

          <nav className="h-[25px] shrink-0 flex items-center border-b border-[#dedede] text-[14px] text-[#3d3d3d]">
            {menus.map((m) => (
              <button key={m} className="px-[9px]">{m}</button>
            ))}
          </nav>

          <div className="h-[38px] shrink-0 flex items-center pl-[3px]" role="toolbar" aria-label="Standard">
            <ToolItems items={standardBar} />
          </div>
          <div className="h-10 shrink-0 flex items-center pl-1" role="toolbar" aria-label="Formatting">
            <ComboBox label="Paragraph style" value="Default Paragraph Style" width="w-[202px]" clipped />
            <ToolItems items={styleTools} />
            <ComboBox label="Font name" value="Liberation Serif" width="w-[221px]" />
            <div className="w-2" />
            <ComboBox label="Font size" value="12 pt" width="w-[101px]" />
            <ToolItems items={formatTools} />
          </div>

          <div className="flex-1 min-h-0 flex">
            <main className="flex-1 min-w-0 flex flex-col items-center">
              <div className="w-full pt-1 pb-[19px] flex items-start">
                <div className="flex-1">
                  <div className="size-[7px] ml-2 mt-1 border-l-2 border-b-2 border-[#9a9a9a]" />
                </div>
                <Ruler />
                <div className="flex-1" />
              </div>
              <Page />
            </main>
            <div className="w-[13px] shrink-0 pl-1 pt-[5px]">
              <div className="w-1.5 h-[calc(75%-4px)] rounded-full bg-[#8a8a8a]" />
            </div>
            <aside className="relative w-[59px] shrink-0 border-l border-[#b8b8b8] flex flex-col items-center gap-2 pt-[3px] pl-px">
              {deck.map((name) => (
                <button
                  key={name}
                  aria-label={name}
                  className={`w-9 h-[34px] rounded-md border flex items-center justify-center ${
                    name === 'properties' ? 'mt-0.5 bg-[#d5d5d5] border-[#c4c4c4]' : 'border-transparent'
                  }`}
                >
                  <Icon>{icons[name]}</Icon>
                </button>
              ))}
              <button aria-label="Hide sidebar" className="absolute -left-px top-[409px] w-[7px] h-[73px] bg-[#9b9b9b] flex items-center justify-center">
                <svg width="5" height="8" viewBox="0 0 5 8" aria-hidden="true"><path d="M0 0l5 4-5 4z" fill="#fff" /></svg>
              </button>
            </aside>
          </div>

          <StatusBar />
        </div>
      </div>

      <svg width="20" height="28" viewBox="0 0 20 28" className="absolute left-[1376px] top-[851px] pointer-events-none" aria-hidden="true">
        <path d="M1.500 1.500v22l5-4.500 3 6.500c1.500 1 3.500 0 3.500-1.500l-3-6h6.500z" fill="#2b2b2b" stroke="#fff" strokeWidth="1.300" />
      </svg>
    </div>
  );
}
